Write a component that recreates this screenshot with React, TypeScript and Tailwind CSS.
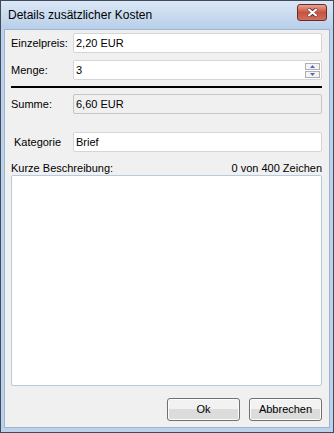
import React, { useState } from 'react';

const font = "font-['Liberation_Sans','Arial',sans-serif]";

const Field: React.FC<{ label: string; value: string; disabled?: boolean; spinner?: boolean; indent?: boolean }> = ({
  label,
  value,
  disabled,
  spinner,
  indent,
}) => (
  <div className="flex items-center h-[20px]">
    <span className={`w-[62px] shrink-0 text-[11px] text-black ${indent ? 'pl-[3px]' : ''}`}>{label}</span>
    <div
      className={`relative flex-1 h-[20px] flex items-center border rounded-[2px] px-[2px] text-[11px] text-black ${
        disabled ? 'bg-[#f0f0f0] border-[#c5c5c5]' : 'bg-white border-[#d5d5d5]'
      }`}
    >
      {value}
      {spinner && (
        <div className="absolute right-[1px] top-[2px] flex flex-col gap-[1px]">
          <div className="w-[15px] h-[7px] border border-[#b0b0b0] bg-[#f4f4f4] flex items-center justify-center">
            <svg width="5" height="3" viewBox="0 0 5 3">
              <path d="M2.5 0 L5 3 L0 3 Z" fill="#4a6bc0" />
            </svg>
          </div>
          <div className="w-[15px] h-[7px] border border-[#b0b0b0] bg-[#f4f4f4] flex items-center justify-center">
            <svg width="5" height="3" viewBox="0 0 5 3">
              <path d="M0 0 L5 0 L2.5 3 Z" fill="#4a6bc0" />
            </svg>
          </div>
        </div>
      )}
    </div>
  </div>
);

const WinButton: React.FC<{ children: React.ReactNode }> = ({ children }) => (
  <button className="w-[73px] h-[23px] rounded-[3px] border border-[#707070] bg-gradient-to-b from-[#f2f2f2] from-50% to-[#dcdcdc] to-50% text-[11px] text-black shadow-[inset_0_0_0_1px_#fcfcfc]">
    {children}
  </button>
);

export default function App() {
  const [text, setText] = useState('');

  return (
    <div className={`w-[334px] h-[433px] flex flex-col border border-[#3f4b5b] bg-[#bcd2ec] ${font}`}>
      {/* title bar */}
      <div className="h-[28px] shrink-0 flex items-center justify-between pl-[7px] pr-[6px] bg-gradient-to-b from-[#dbe7f5] to-[#b8cfea]">
        <span className="text-[12px] text-black">Details zusätzlicher Kosten</span>
        <div className="w-[30px] h-[17px] mb-[5px] rounded-[3px] border border-[#6e2a2a] bg-gradient-to-b from-[#e8a394] via-[#c7523f] to-[#d0705c] flex items-center justify-center">
          <svg width="11" height="9" viewBox="0 0 11 9">
            <path d="M1 0.5 L5.5 4 L10 0.5 M1 8.5 L5.5 5 L10 8.5" stroke="#5a2a2a" strokeWidth="3.2" fill="none" />
            <path d="M1.3 1 L9.7 8 M9.7 1 L1.3 8" stroke="#ffffff" strokeWidth="2.2" fill="none" />
          </svg>
        </div>
      </div>

      {/* body */}
      <div className="flex-1 flex flex-col mx-[3px] mb-[4px] bg-[#f0f0f0] border border-[#9fb4cd] pl-[6px] pr-[7px] pt-[3px]">
        <div className="flex flex-col gap-[7px]">
          <Field label="Einzelpreis:" value="2,20 EUR" />
          <Field label="Menge:" value="3" spinner />
        </div>
        <div className="h-[2px] bg-black mt-[6px] mb-[6px]" />
        <Field label="Summe:" value="6,60 EUR" disabled />

        <div className="mt-[18px]">
          <Field label="Kategorie" value="Brief" indent />
        </div>

        <div className="flex justify-between items-end mt-[11px] h-[12px] leading-[12px] pb-[1px] text-[11px] text-black">
          <span>Kurze Beschreibung:</span>
          <span>{text.length} von 400 Zeichen</span>
        </div>
        <textarea
          value={text}
          onChange={(e) => setText(e.target.value.slice(0, 400))}
          className="h-[211px] resize-none bg-white border border-[#b5cbe3] rounded-[2px] outline-none text-[11px] p-[2px]"
        />

        <div className="flex justify-end gap-[9px] mt-[12px]">
          <WinButton>Ok</WinButton>
          <WinButton>Abbrechen</WinButton>
        </div>
      </div>
    </div>
  );
}
